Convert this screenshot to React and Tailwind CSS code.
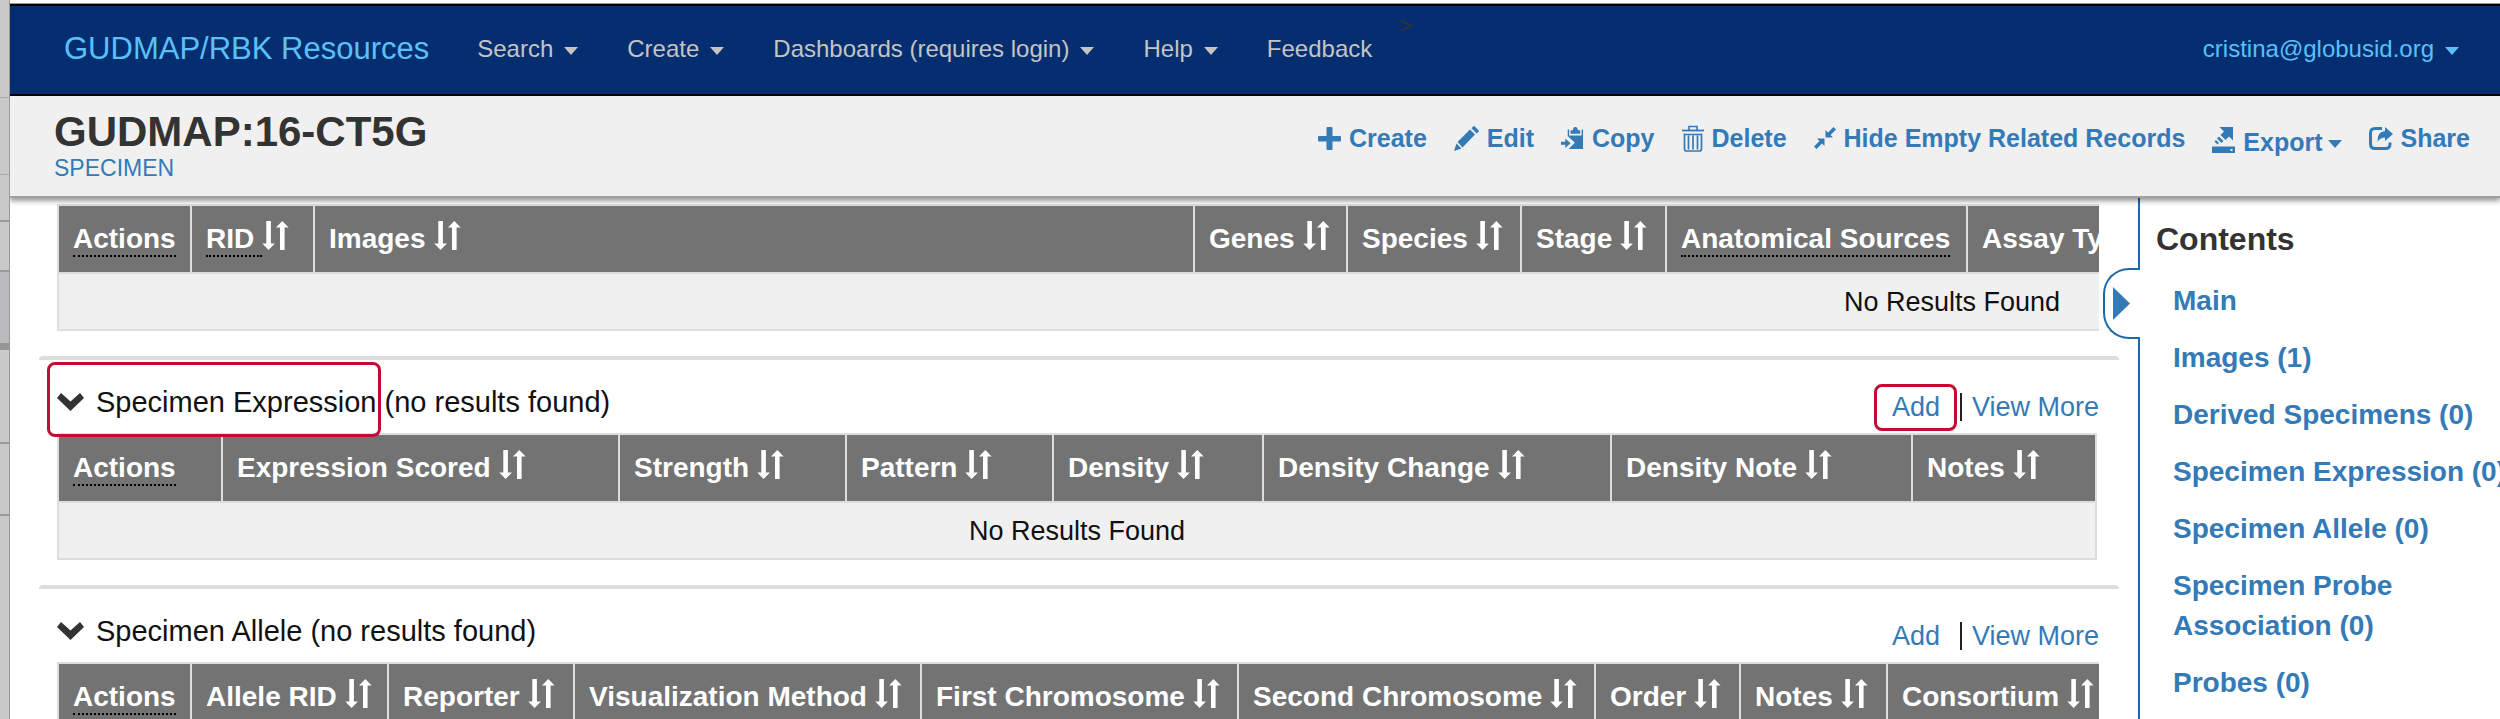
import React from "react";

const BLUE = "text-[#337ab7]";

function Caret({ className = "" }) {
  return (
    <svg viewBox="0 0 14 8" className={`w-[14px] h-2 shrink-0 ${className}`} fill="currentColor" aria-hidden="true">
      <path d="M0 0h14L7 8z" />
    </svg>
  );
}

function SortIcon() {
  return (
    <svg viewBox="0 0 27 29" className="w-[27px] h-[29px] shrink-0" fill="currentColor" aria-hidden="true">
      <path d="M4.300 0h4.600v22.500h4L6.600 29 .3 22.500h4z" />
      <path d="M18 29h4.600V6.500h4L20.300 0 14 6.500h4z" />
    </svg>
  );
}

const icons = {
  plus: (
    <svg viewBox="0 0 23 23" className="w-[23px] h-[23px]" fill="currentColor" aria-hidden="true">
      <path d="M9.500 0h4q1 0 1 1v8H22q1 0 1 1v3.500q0 1-1 1h-7.500V22q0 1-1 1h-4q-1 0-1-1v-7.500H1q-1 0-1-1V10q0-1 1-1h7.500V1q0-1 1-1z" />
    </svg>
  ),
  pencil: (
    <svg viewBox="0 0 25 25" className="w-[25px] h-[25px]" fill="currentColor" aria-hidden="true">
      <path d="M0 25l2.500-7.500 5 5zM3.500 16L16 3.500l5 5L8.500 21.500zM17.500 2.200L19.200.5q.8-.8 1.600 0l3.700 3.700q.8.8 0 1.600L22.600 7.500z" />
    </svg>
  ),
  copy: (
    <svg viewBox="0 0 24 24" className="w-[23px] h-6" fill="currentColor" aria-hidden="true">
      <path d="M7 3h1.500v6.500h13V3H23v20.500H8l6.500-6.500L7 10z" />
      <path d="M10 7.500V4h2.500q0-3.500 2.500-3.500T17.500 4H20v3.500z" />
      <path d="M0 16h4.500v-3.500L10 17.500l-5.500 5V19H0z" />
    </svg>
  ),
  trash: (
    <svg viewBox="0 0 22 27" className="w-[22px] h-[27px]" fill="none" stroke="currentColor" aria-hidden="true">
      <path d="M0 5.500h22" strokeWidth="1.800" />
      <path d="M7 5V1.500h8V5" strokeWidth="1.600" />
      <path d="M2.500 8.500v15q0 2.500 2 2.500h13q2 0 2-2.500v-15M2.500 9.500h17M6.500 10.500v14M11 10.500v14M15.500 10.500v14" strokeWidth="1.700" />
    </svg>
  ),
  collapse: (
    <svg viewBox="0 0 22 22" className="w-[22px] h-[22px]" fill="currentColor" aria-hidden="true">
      <path d="M11.500 10.500V3l2.500 2.500L19.500 0 22 2.500 16.500 8l2.500 2.500z" />
      <path d="M10.500 11.500V19L8 16.500 2.500 22 0 19.500 5.500 14 3 11.500z" />
    </svg>
  ),
  exportFile: (
    <svg viewBox="0 0 23 26" className="w-[23px] h-[26px]" fill="currentColor" aria-hidden="true">
      <path d="M7.500 0H21v13.500l-4-4-3.500 3.500-5-5L12 4.500z" />
      <path d="M7 9.500l4.500 4.500-2 2L5 11.500zM4 13l3 3-1.500 1.500-3-3z" />
      <path fillRule="evenodd" d="M0 19.500h23V26H0zM18.500 22v2h2v-2z" />
    </svg>
  ),
  share: (
    <svg viewBox="0 0 24 23" className="w-6 h-[23px]" fill="currentColor" aria-hidden="true">
      <path d="M13 1.500H6Q1.500 1.500 1.500 6v11q0 4.500 4.500 4.500h10.500q4.500 0 4.500-4.500v-1.500" fill="none" stroke="currentColor" strokeWidth="3" />
      <path d="M16 0l8 7-8 7v-3.500q-5 0-7.500 4.500Q8 4.500 16 4z" />
    </svg>
  ),
};

const actions = [
  { label: "Create", icon: "plus" },
  { label: "Edit", icon: "pencil" },
  { label: "Copy", icon: "copy" },
  { label: "Delete", icon: "trash" },
  { label: "Hide Empty Related Records", icon: "collapse" },
  { label: "Export", icon: "exportFile", menu: true },
  { label: "Share", icon: "share" },
];

const menus = [
  { label: "Search", menu: true },
  { label: "Create", menu: true },
  { label: "Dashboards (requires login)", menu: true },
  { label: "Help", menu: true },
  { label: "Feedback" },
];

const imageColumns = [
  { name: "Actions", width: "w-[133px]", hint: true, noSort: true },
  { name: "RID", width: "w-[123px]", hint: true },
  { name: "Images", width: "w-[880px]" },
  { name: "Genes", width: "w-[153px]" },
  { name: "Species", width: "w-[174px]" },
  { name: "Stage", width: "w-[145px]" },
  { name: "Anatomical Sources", width: "w-[301px]", hint: true, noSort: true },
  { name: "Assay Type", width: "" },
];

const expressionColumns = [
  { name: "Actions", width: "w-[164px]", hint: true, noSort: true },
  { name: "Expression Scored", width: "w-[397px]" },
  { name: "Strength", width: "w-[227px]" },
  { name: "Pattern", width: "w-[207px]" },
  { name: "Density", width: "w-[210px]" },
  { name: "Density Change", width: "w-[348px]" },
  { name: "Density Note", width: "w-[301px]" },
  { name: "Notes", width: "" },
];

const alleleColumns = [
  { name: "Actions", width: "w-[133px]", hint: true, noSort: true },
  { name: "Allele RID", width: "w-[197px]" },
  { name: "Reporter", width: "w-[186px]" },
  { name: "Visualization Method", width: "w-[347px]" },
  { name: "First Chromosome", width: "w-[317px]" },
  { name: "Second Chromosome", width: "w-[357px]" },
  { name: "Order", width: "w-[145px]" },
  { name: "Notes", width: "w-[147px]" },
  { name: "Consortium", width: "" },
];

const contents = [
  "Main",
  "Images (1)",
  "Derived Specimens (0)",
  "Specimen Expression (0)",
  "Specimen Allele (0)",
  "Specimen Probe Association (0)",
  "Probes (0)",
];

function RecordTable({ columns, size = "w-[calc(100%-2px)]" }) {
  return (
    <div className="ml-[47px] overflow-hidden">
      <table className={`table-fixed border-collapse text-left ${size}`}>
        <thead>
          <tr className="h-[68px] bg-[#737373] text-white">
            {columns.map((c) => (
              <th key={c.name} className={`border-2 border-[#ddd] px-[14px] py-0 font-bold ${c.width}`}>
                <span className="flex items-start whitespace-nowrap text-[28px] leading-8">
                  <span
                    className={`border-b-2 pt-[2px] ${c.noSort ? "" : "pr-2"} ${c.hint ? "border-dotted border-black" : "border-transparent"}`}
                  >
                    {c.name}
                  </span>
                  {!c.noSort && (
                    <button type="button" aria-label={`Sort by ${c.name}`} className="flex">
                      <SortIcon />
                    </button>
                  )}
                </span>
              </th>
            ))}
          </tr>
        </thead>
        <tbody>
          <tr className="h-[57px] bg-[#f0f0f0]">
            <td colSpan={columns.length} className="border-2 border-[#ddd] p-0 text-center text-[27px] leading-8 text-[#111]">
              No Results Found
            </td>
          </tr>
        </tbody>
      </table>
    </div>
  );
}

function Section({ title, columns, size, marked }) {
  return (
    <section>
      <hr className="ml-[29px] -mr-5 h-1 rounded-t border-0 bg-[#ddd]" />
      <div className="ml-[47px] flex h-[73px] items-end justify-between">
        <h2 className="relative flex items-center gap-3 pb-[13px] text-[29px] leading-9 text-[#111]">
          <svg viewBox="0 0 27 18" className="w-[27px] h-[18px] text-[#333]" fill="currentColor" aria-hidden="true">
            <path d="M4 0l9.500 8.500L23 0l4 5-13.500 13L0 5z" />
          </svg>
          <span>{title} (no results found)</span>
          {marked && (
            <span className="absolute -left-[10px] -bottom-1 h-[75px] w-[334px] rounded-lg border-[3px] border-[#c10d36]" />
          )}
        </h2>
        <div className="flex items-center pb-2 text-[27px] leading-9">
          <span className="relative">
            <a href="#add" className={BLUE}>Add</a>
            {marked && (
              <span className="absolute -left-[18px] -bottom-[6px] h-[47px] w-[83px] rounded-lg border-[3px] border-[#c10d36]" />
            )}
          </span>
          <span className="ml-5 mr-[10px] h-7 w-[2px] bg-[#222]" />
          <a href="#more" className={BLUE}>View More</a>
        </div>
      </div>
      <RecordTable columns={columns} size={size} />
      <div className="h-[25px]" />
    </section>
  );
}

function WindowEdge() {
  return (
    <div className="flex w-[10px] shrink-0 flex-col border-r border-[#999] bg-[#c9c9c9]" aria-hidden="true">
      <div className="h-[98px] border-b border-[#aaaab4]" />
      <div className="h-[77px] border-b border-[#aaaab4]" />
      <div className="h-[47px] border-b-2 border-[#999]" />
      <div className="h-[50px] border-b-2 border-[#999]" />
      <div className="h-[71px] bg-[#b8babd]" />
      <div className="h-[7px] bg-[#959595]" />
      <div className="h-[94px] border-b-2 border-[#999]" />
      <div className="h-[72px] border-b-2 border-[#999]" />
      <div className="flex-1" />
    </div>
  );
}

export default function App() {
  return (
    <div className="flex h-screen overflow-hidden bg-white font-['Liberation_Sans',Arial,sans-serif]">
      <WindowEdge />
      <div className="flex min-w-0 flex-1 flex-col overflow-hidden">
        <div className="h-1 shrink-0 border-b border-[#999]" />
        <nav className="flex h-[92px] shrink-0 items-center border-y-2 border-black bg-[#042e70] pb-[3px] pl-[54px] pr-[41px] text-[24px] leading-8 text-[#c4c4c4]">
          <a href="#home" className="mr-12 text-[31px] text-[#5bc0f8]">GUDMAP/RBK Resources</a>
          <div className="flex items-center gap-[49px]">
            {menus.map((m) =>
              m.menu ? (
                <button type="button" key={m.label} className="flex items-center gap-[11px] whitespace-nowrap">
                  {m.label}
                  <Caret className="mt-1" />
                </button>
              ) : (
                <a href="#feedback" key={m.label}>{m.label}</a>
              )
            )}
          </div>
          <span className="ml-[27px] self-start pt-1 text-[22px] text-[#333]">&gt;</span>
          <button type="button" className="ml-auto flex items-center gap-[11px] text-[#5bc0f8]">
            cristina@globusid.org
            <Caret className="mt-1" />
          </button>
        </nav>
        <header className="relative z-10 flex h-[102px] shrink-0 justify-between border-b-2 border-[#a0a0a0] bg-[#f0f0f0] pl-[44px] pr-[30px] shadow-[0_3px_5px_rgba(0,0,0,0.4)]">
          <div className="pt-[14px]">
            <h1 className="text-[42px] leading-[44px] font-bold text-[#333]">GUDMAP:16-CT5G</h1>
            <a href="#specimen" className={`block text-[23px] leading-7 ${BLUE}`}>SPECIMEN</a>
          </div>
          <div className="flex items-start gap-[27px] pt-[26px]">
            {actions.map((a) => (
              <button
                type="button"
                key={a.label}
                className={`flex items-center gap-2 whitespace-nowrap text-[25px] leading-8 font-bold ${BLUE}`}
              >
                {icons[a.icon]}
                {a.menu ? (
                  <span className="flex items-center gap-[5px] pt-1">
                    {a.label}
                    <Caret className="mt-1" />
                  </span>
                ) : (
                  a.label
                )}
              </button>
            ))}
          </div>
        </header>
        <div className="flex min-h-0 flex-1">
          <main className="min-w-0 flex-1 overflow-hidden pt-[6px]">
            <div className="mr-[39px]">
              <RecordTable columns={imageColumns} size="w-[3790px]" />
              <div className="h-[25px]" />
              <Section title="Specimen Expression" columns={expressionColumns} marked />
              <Section title="Specimen Allele" columns={alleleColumns} size="w-[2300px]" />
            </div>
          </main>
          <aside className="relative w-[362px] shrink-0 border-l-2 border-[#1f69a8] pl-4 pt-[23px]">
            <button
              type="button"
              aria-label="Hide contents"
              className="absolute -left-[37px] top-[70px] flex h-[71px] w-[37px] items-center rounded-l-[26px] border-2 border-r-0 border-[#1f69a8] bg-white pl-2"
            >
              <svg viewBox="0 0 17 33" className="w-[17px] h-[33px] text-[#337ab7]" fill="currentColor" aria-hidden="true">
                <path d="M0 0l17 16.500L0 33z" />
              </svg>
            </button>
            <h2 className="text-[32px] leading-[36px] font-bold text-[#333]">Contents</h2>
            <ul className="flex flex-col gap-[17px] pl-[17px] pt-6 text-[28px] leading-10 font-bold">
              {contents.map((c) => (
                <li key={c} className={c.includes("Probe A") ? "w-[260px]" : "whitespace-nowrap"}>
                  <a href="#section" className={BLUE}>{c}</a>
                </li>
              ))}
            </ul>
          </aside>
        </div>
      </div>
    </div>
  );
}
